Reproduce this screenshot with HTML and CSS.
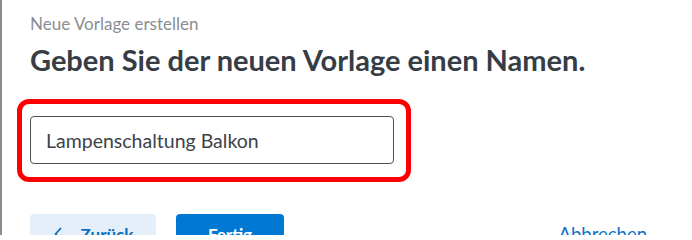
FILE: index.html
```html
<!DOCTYPE html>
<html lang="de">
<head>
<meta charset="utf-8">
<title>Neue Vorlage erstellen</title>
<link rel="stylesheet" href="styles.css">
</head>
<body>
<div class="dialog">
  <div class="eyebrow">Neue Vorlage erstellen</div>
  <h1 class="title">Geben Sie der neuen Vorlage einen Namen.</h1>
  <div class="highlight">
    <div class="field">Lampenschaltung Balkon</div>
  </div>
  <div class="actions">
    <button class="btn btn-secondary">
      <svg class="chev" width="10" height="14" viewBox="0 0 10 14"><path d="M7.5 1.5 L2.5 7 L7.5 12.5" fill="none" stroke="#0a6fc2" stroke-width="1.8" stroke-linecap="round" stroke-linejoin="round"/></svg>
      <span>Zurück</span>
    </button>
    <button class="btn btn-primary">Fertig</button>
    <button class="btn btn-link">Abbrechen</button>
  </div>
</div>
</body>
</html>
```
FILE: styles.css
```css
html, body {
  margin: 0;
  padding: 0;
  background: #ffffff;
  height: 100%;
  overflow: hidden;
}
.dialog {
  box-sizing: border-box;
  height: 235px;
  overflow: hidden;
  border-left: 2px solid #8c8c8c;
  padding: 14px 30px 0 28px;
  font-family: Lato, "Noto Sans", sans-serif;
}
.eyebrow {
  font-size: 17px;
  line-height: 20px;
  color: #898e94;
}
.title {
  margin: 9px 0 0 0;
  font-size: 29px;
  line-height: 34px;
  font-weight: 700;
  color: #363d45;
}
.highlight {
  box-sizing: border-box;
  margin: 22px 0 0 -13px;
  width: 394px;
  border: 5px solid #ff0000;
  border-radius: 12px;
  padding: 12px 12px 13px 8px;
}
.field {
  box-sizing: border-box;
  width: 364px;
  height: 48px;
  border: 1px solid #4b5057;
  border-radius: 4px;
  padding: 0 15px;
  display: flex;
  align-items: center;
  font-size: 19.5px;
  color: #3d4248;
}
.actions {
  margin-top: 32px;
  display: flex;
  gap: 20px;
}
.btn {
  flex: none;
  height: 40px;
  border: none;
  border-radius: 4px;
  font-family: Lato, "Noto Sans", sans-serif;
  font-size: 17px;
  font-weight: 700;
  display: flex;
  align-items: center;
  justify-content: center;
  gap: 18px;
  padding: 0;
}
.btn-secondary {
  width: 126px;
  background: #e5effa;
  color: #0a6fc2;
}
.btn-primary {
  width: 108px;
  background: #0078d4;
  color: #ffffff;
}
.btn-link {
  margin-left: auto;
  background: transparent;
  color: #0a73c9;
  font-size: 18.5px;
  font-weight: 400;
  padding: 0 15px;
}
```
